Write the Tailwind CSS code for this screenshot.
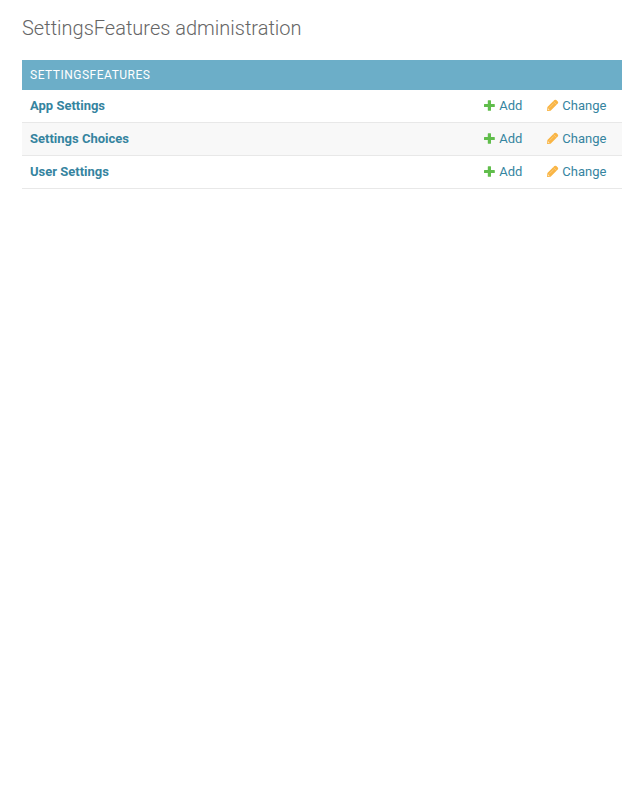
<!DOCTYPE html>
<html lang="en">
<head>
<meta charset="utf-8">
<title>SettingsFeatures administration</title>
<script src="https://cdn.jsdelivr.net/npm/@tailwindcss/browser@4"></script>
</head>
<body class="bg-white font-[Roboto,sans-serif] text-[13px] text-[#333]">
<svg class="hidden">
  <symbol id="add" viewBox="0 0 13 13"><path fill="#60bd4b" d="M4.800 1.700q0-.5.5-.5h2.200q.5 0 .5.5v3.200h3.300q.5 0 .5.5v2.200q0 .5-.5.5H8v3.200q0 .5-.5.5H5.300q-.5 0-.5-.5V8.100H1.500q-.5 0-.5-.5V5.400q0-.5.5-.5h3.300z"/></symbol>
  <symbol id="change" viewBox="0 0 13 13"><path fill="#f9b545" d="M8.400 1.100q1-.9 1.900 0l1.500 1.500q.9.900 0 1.900L4.600 11.700 1 12.100l.4-4z"/><path fill="none" stroke="#fff" stroke-opacity=".45" stroke-width=".6" d="M7.500 2.500l3 3M3.500 8.700l4.200-4.200"/><path fill="#fff" fill-opacity=".65" d="M2.100 9.200l1.500 1.500-1.500.3-.3-.3z"/></symbol>
</svg>
<main class="px-[22px] pr-5 pt-4">
  <h1 class="mb-5 text-[20px] leading-6 font-light text-[#666]">SettingsFeatures administration</h1>
  <section>
    <h2 class="h-[30px] bg-[#6caec8] px-2 text-[12px] leading-[30px] font-normal tracking-[0.5px] text-white uppercase">SettingsFeatures</h2>
    <ul class="text-[#35849f]">
      <li class="flex h-[33px] border-b border-[#e8e8e8] py-2 pl-2 leading-4"><b class="flex-1 font-bold">App Settings</b><a class="flex w-[63px]"><svg class="mr-[3px] mt-px size-[13px]"><use href="#add"/></svg>Add</a><a class="flex w-[75.700px]"><svg class="mr-[3px] mt-px size-[13px]"><use href="#change"/></svg>Change</a></li>
      <li class="flex h-[33px] border-b border-[#e8e8e8] bg-[#f8f8f8] py-2 pl-2 leading-4"><b class="flex-1 font-bold">Settings Choices</b><a class="flex w-[63px]"><svg class="mr-[3px] mt-px size-[13px]"><use href="#add"/></svg>Add</a><a class="flex w-[75.700px]"><svg class="mr-[3px] mt-px size-[13px]"><use href="#change"/></svg>Change</a></li>
      <li class="flex h-[33px] border-b border-[#e8e8e8] py-2 pl-2 leading-4"><b class="flex-1 font-bold">User Settings</b><a class="flex w-[63px]"><svg class="mr-[3px] mt-px size-[13px]"><use href="#add"/></svg>Add</a><a class="flex w-[75.700px]"><svg class="mr-[3px] mt-px size-[13px]"><use href="#change"/></svg>Change</a></li>
    </ul>
  </section>
</main>
</body>
</html>
